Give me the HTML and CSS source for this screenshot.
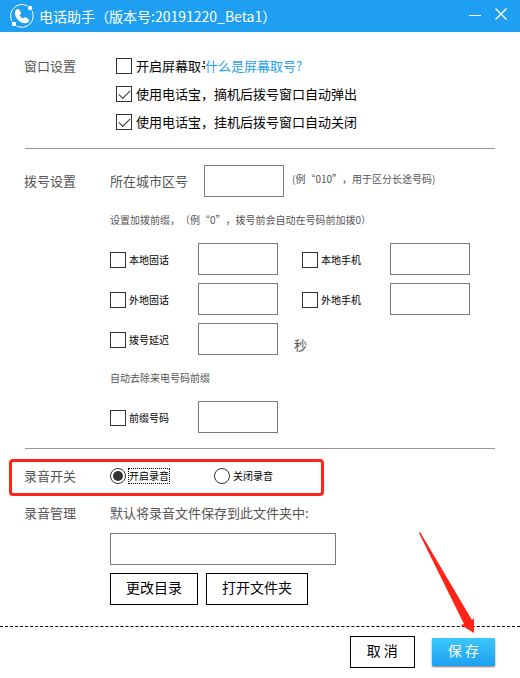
FILE: index.html
```html
<!DOCTYPE html>
<html lang="zh-CN">
<head>
    <meta charset="UTF-8">
    <meta name="viewport" content="width=device-width, initial-scale=1.0">
    <title>电话助手</title>
    <link rel="stylesheet" href="styles.css">
</head>
<body>
    <header class="titlebar">
        <svg class="logo" viewBox="0 0 24 24" width="24" height="24" aria-hidden="true">
            <path d="M17.500 1.900A11.400 11.400 0 0 0 1.900 17.200M22 6.800A11.400 11.400 0 0 1 6.500 22" fill="none" stroke="#fff" stroke-width="1"/>
            <circle cx="20" cy="4" r="2.200" fill="#fff"/>
            <rect x="2" y="18" width="4" height="4" rx="1" fill="#fff"/>
            <path d="M6 5.800C7 4.600 8.700 4.600 9.500 6L10.800 8.300C11.400 9.600 10.400 10.500 9.700 11.200C10.300 12.800 11.700 14 13.300 14.500C14.200 13.500 15 13 16.200 13.600L18.300 15C19.400 16 19.100 17.500 17.900 18.400C15.300 20.200 11 18.900 8 15.900C5 12.800 4 8.400 6 5.800Z" fill="#fff"/>
        </svg>
        <h1>电话助手（版本号:20191220_Beta1）</h1>
        <button class="win-btn" type="button" aria-label="最小化">
            <svg viewBox="0 0 12 12" width="12" height="12"><path d="M0 7.500H12" stroke="#fff"/></svg>
        </button>
        <button class="win-btn" type="button" aria-label="关闭">
            <svg viewBox="0 0 12 12" width="12" height="12"><path d="M.5 .5L11.500 11.500M11.500 .5L.5 11.500" stroke="#fff" stroke-width="1.400"/></svg>
        </button>
    </header>

    <form>
        <section class="section window-section">
            <h2>窗口设置</h2>
            <div class="options">
                <div class="option-row">
                    <label class="check clipped"><input type="checkbox"><span>开启屏幕取号</span></label>
                    <a href="#">什么是屏幕取号?</a>
                </div>
                <div class="option-row">
                    <label class="check"><input type="checkbox" checked><span>使用电话宝，摘机后拨号窗口自动弹出</span></label>
                </div>
                <div class="option-row">
                    <label class="check"><input type="checkbox" checked><span>使用电话宝，挂机后拨号窗口自动关闭</span></label>
                </div>
            </div>
        </section>

        <section class="section dial-section">
            <h2>拨号设置</h2>
            <div>
                <div class="area-row">
                    <label for="area">所在城市区号</label>
                    <input class="box" type="text" id="area">
                    <span class="hint">(例“010”，用于区分长途号码)</span>
                </div>
                <p class="hint">设置加拨前缀，（例“0”，拨号前会自动在号码前加拨0）</p>
                <div class="prefix-grid">
                    <label class="check small"><input type="checkbox"><span>本地固话</span></label>
                    <input class="box" type="text" aria-label="本地固话前缀">
                    <label class="check small second"><input type="checkbox"><span>本地手机</span></label>
                    <input class="box" type="text" aria-label="本地手机前缀">

                    <label class="check small"><input type="checkbox"><span>外地固话</span></label>
                    <input class="box" type="text" aria-label="外地固话前缀">
                    <label class="check small second"><input type="checkbox"><span>外地手机</span></label>
                    <input class="box" type="text" aria-label="外地手机前缀">

                    <label class="check small"><input type="checkbox"><span>拨号延迟</span></label>
                    <input class="box" type="text" aria-label="拨号延迟秒数">
                    <span class="unit">秒</span>
                </div>
                <p class="hint">自动去除来电号码前缀</p>
                <div class="prefix-grid">
                    <label class="check small"><input type="checkbox"><span>前缀号码</span></label>
                    <input class="box" type="text" aria-label="前缀号码">
                </div>
            </div>
        </section>

        <section class="record-switch">
            <h2>录音开关</h2>
            <label class="check small"><input type="radio" name="record" checked><span class="focused">开启录音</span></label>
            <label class="check small"><input type="radio" name="record"><span>关闭录音</span></label>
        </section>

        <section class="section record-section">
            <h2>录音管理</h2>
            <div>
                <label class="path-label" for="path">默认将录音文件保存到此文件夹中:</label>
                <input class="box path" type="text" id="path">
                <div class="buttons">
                    <button class="btn" type="button">更改目录</button>
                    <button class="btn" type="button">打开文件夹</button>
                </div>
            </div>
        </section>

        <footer class="footer">
            <button class="btn" type="button">取 消</button>
            <button class="btn btn-save" type="submit">保 存</button>
            <svg class="arrow" viewBox="0 0 58 102" width="58" height="102" aria-hidden="true">
                <path d="M1 0L0 1L45 92L42 93L55 101L55 86L53 88Z" fill="#ff2318"/>
            </svg>
        </footer>
    </form>
</body>
</html>
```

FILE: styles.css
```css
* {
    box-sizing: border-box;
}
body {
    margin: 0;
    background: #fff;
    color: #000;
    font-family: "Noto Sans CJK SC", sans-serif;
    font-size: 13px;
    line-height: 20px;
    text-spacing-trim: space-all;
}
input, button {
    font-family: inherit;
    margin: 0;
}
h1, h2, p {
    margin: 0;
    font-weight: normal;
}
h2 {
    font-size: 13px;
    color: #555;
}
a {
    color: #1e9ff2;
    text-decoration: none;
}

/* title bar */
.titlebar {
    display: flex;
    align-items: center;
    height: 32px;
    padding: 0 13px 0 10px;
    background: #1e9ff2;
    color: #fff;
}
.titlebar h1 {
    flex: 1;
    margin-left: 5px;
    font-size: 14px;
    white-space: nowrap;
}
.win-btn {
    display: flex;
    margin-left: 14px;
    padding: 0 0 4px;
    border: 0;
    background: none;
}

/* sections */
.section {
    display: grid;
    grid-template-columns: 85px 1fr;
    margin: 0 25px;
}
.section h2 {
    margin-left: -1px;
}
.window-section {
    padding: 20px 0 12px;
    border-bottom: 1px solid #999;
}
.window-section h2, .option-row {
    display: flex;
    align-items: center;
    height: 28px;
}
.options {
    padding-left: 6px;
}
.check {
    display: flex;
    align-items: center;
    gap: 4px;
    white-space: nowrap;
}
.clipped {
    width: 89px;
    overflow: hidden;
}
.check input {
    appearance: none;
    display: flex;
    flex: none;
    justify-content: center;
    align-items: center;
    width: 16px;
    height: 16px;
    border: 1px solid #333;
    background: #fff;
}
.check input[type="checkbox"]:checked::before {
    content: "";
    width: 10px;
    height: 5px;
    margin-top: -3px;
    border: solid #333;
    border-width: 0 0 1px 1px;
    transform: rotate(-45deg);
}
.check input[type="radio"] {
    border-radius: 50%;
}
.check input[type="radio"]:checked::before {
    content: "";
    width: 10px;
    height: 10px;
    border-radius: 50%;
    background: #333;
}
.small {
    gap: 2px;
    font-size: 10px;
    line-height: 16px;
}
.small span {
    padding: 0 1px;
}
.small .focused {
    outline: 1px dotted #000;
    outline-offset: -1px;
}
.box {
    width: 80px;
    height: 32px;
    border: 1px solid #7a7a7a;
    background: #fff;
}
.hint {
    font-size: 10px;
    color: #555;
}

/* dialing */
.dial-section {
    padding: 16px 0 15px;
    border-bottom: 1px solid #999;
}
.dial-section h2, .area-row {
    display: flex;
    align-items: center;
    height: 32px;
}
.area-row {
    color: #555;
}
.area-row .box {
    margin: 0 8px 0 16px;
}
.area-row .hint {
    padding-bottom: 4px;
    white-space: nowrap;
}
p.hint {
    line-height: 46px;
}
.prefix-grid {
    display: grid;
    grid-template-columns: 88px 80px 112px 80px;
    row-gap: 8px;
}
.prefix-grid .check {
    padding-top: 2px;
}
.second {
    padding-left: 24px;
}
.unit {
    align-self: end;
    padding-left: 16px;
    color: #555;
}

/* recording */
.record-switch {
    display: grid;
    grid-template-columns: 86px 104px auto;
    align-items: center;
    width: fit-content;
    height: 37px;
    margin: 10px 9px 0;
    padding: 0 47px 4px 12px;
    border: 3px solid #ff2318;
    border-radius: 4px;
}
.path-label {
    color: #555;
}
.record-section {
    padding: 7px 0 21px;
}
.path {
    display: block;
    width: 226px;
    margin: 10px 0 8px;
}
.buttons {
    display: flex;
    gap: 8px;
}
.btn {
    height: 32px;
    padding: 0 15px 4px;
    border: 1px solid #000;
    background: #fff;
    color: #000;
    font-size: 14px;
}

/* footer */
.footer {
    position: relative;
    display: flex;
    justify-content: flex-end;
    align-items: center;
    gap: 17px;
    padding: 9px 25px 10px;
    border-top: 1px dashed #000;
}
.footer .btn {
    padding: 0 16px 4px;
}
.footer .btn-save {
    height: 28px;
    border: 0;
    border-radius: 1px;
    background: linear-gradient(#3bc8fa, #1e9ff2);
    box-shadow: 0 1px 2px #777;
    color: #fff;
}
.arrow {
    position: absolute;
    top: -95px;
    right: 43px;
}
```
